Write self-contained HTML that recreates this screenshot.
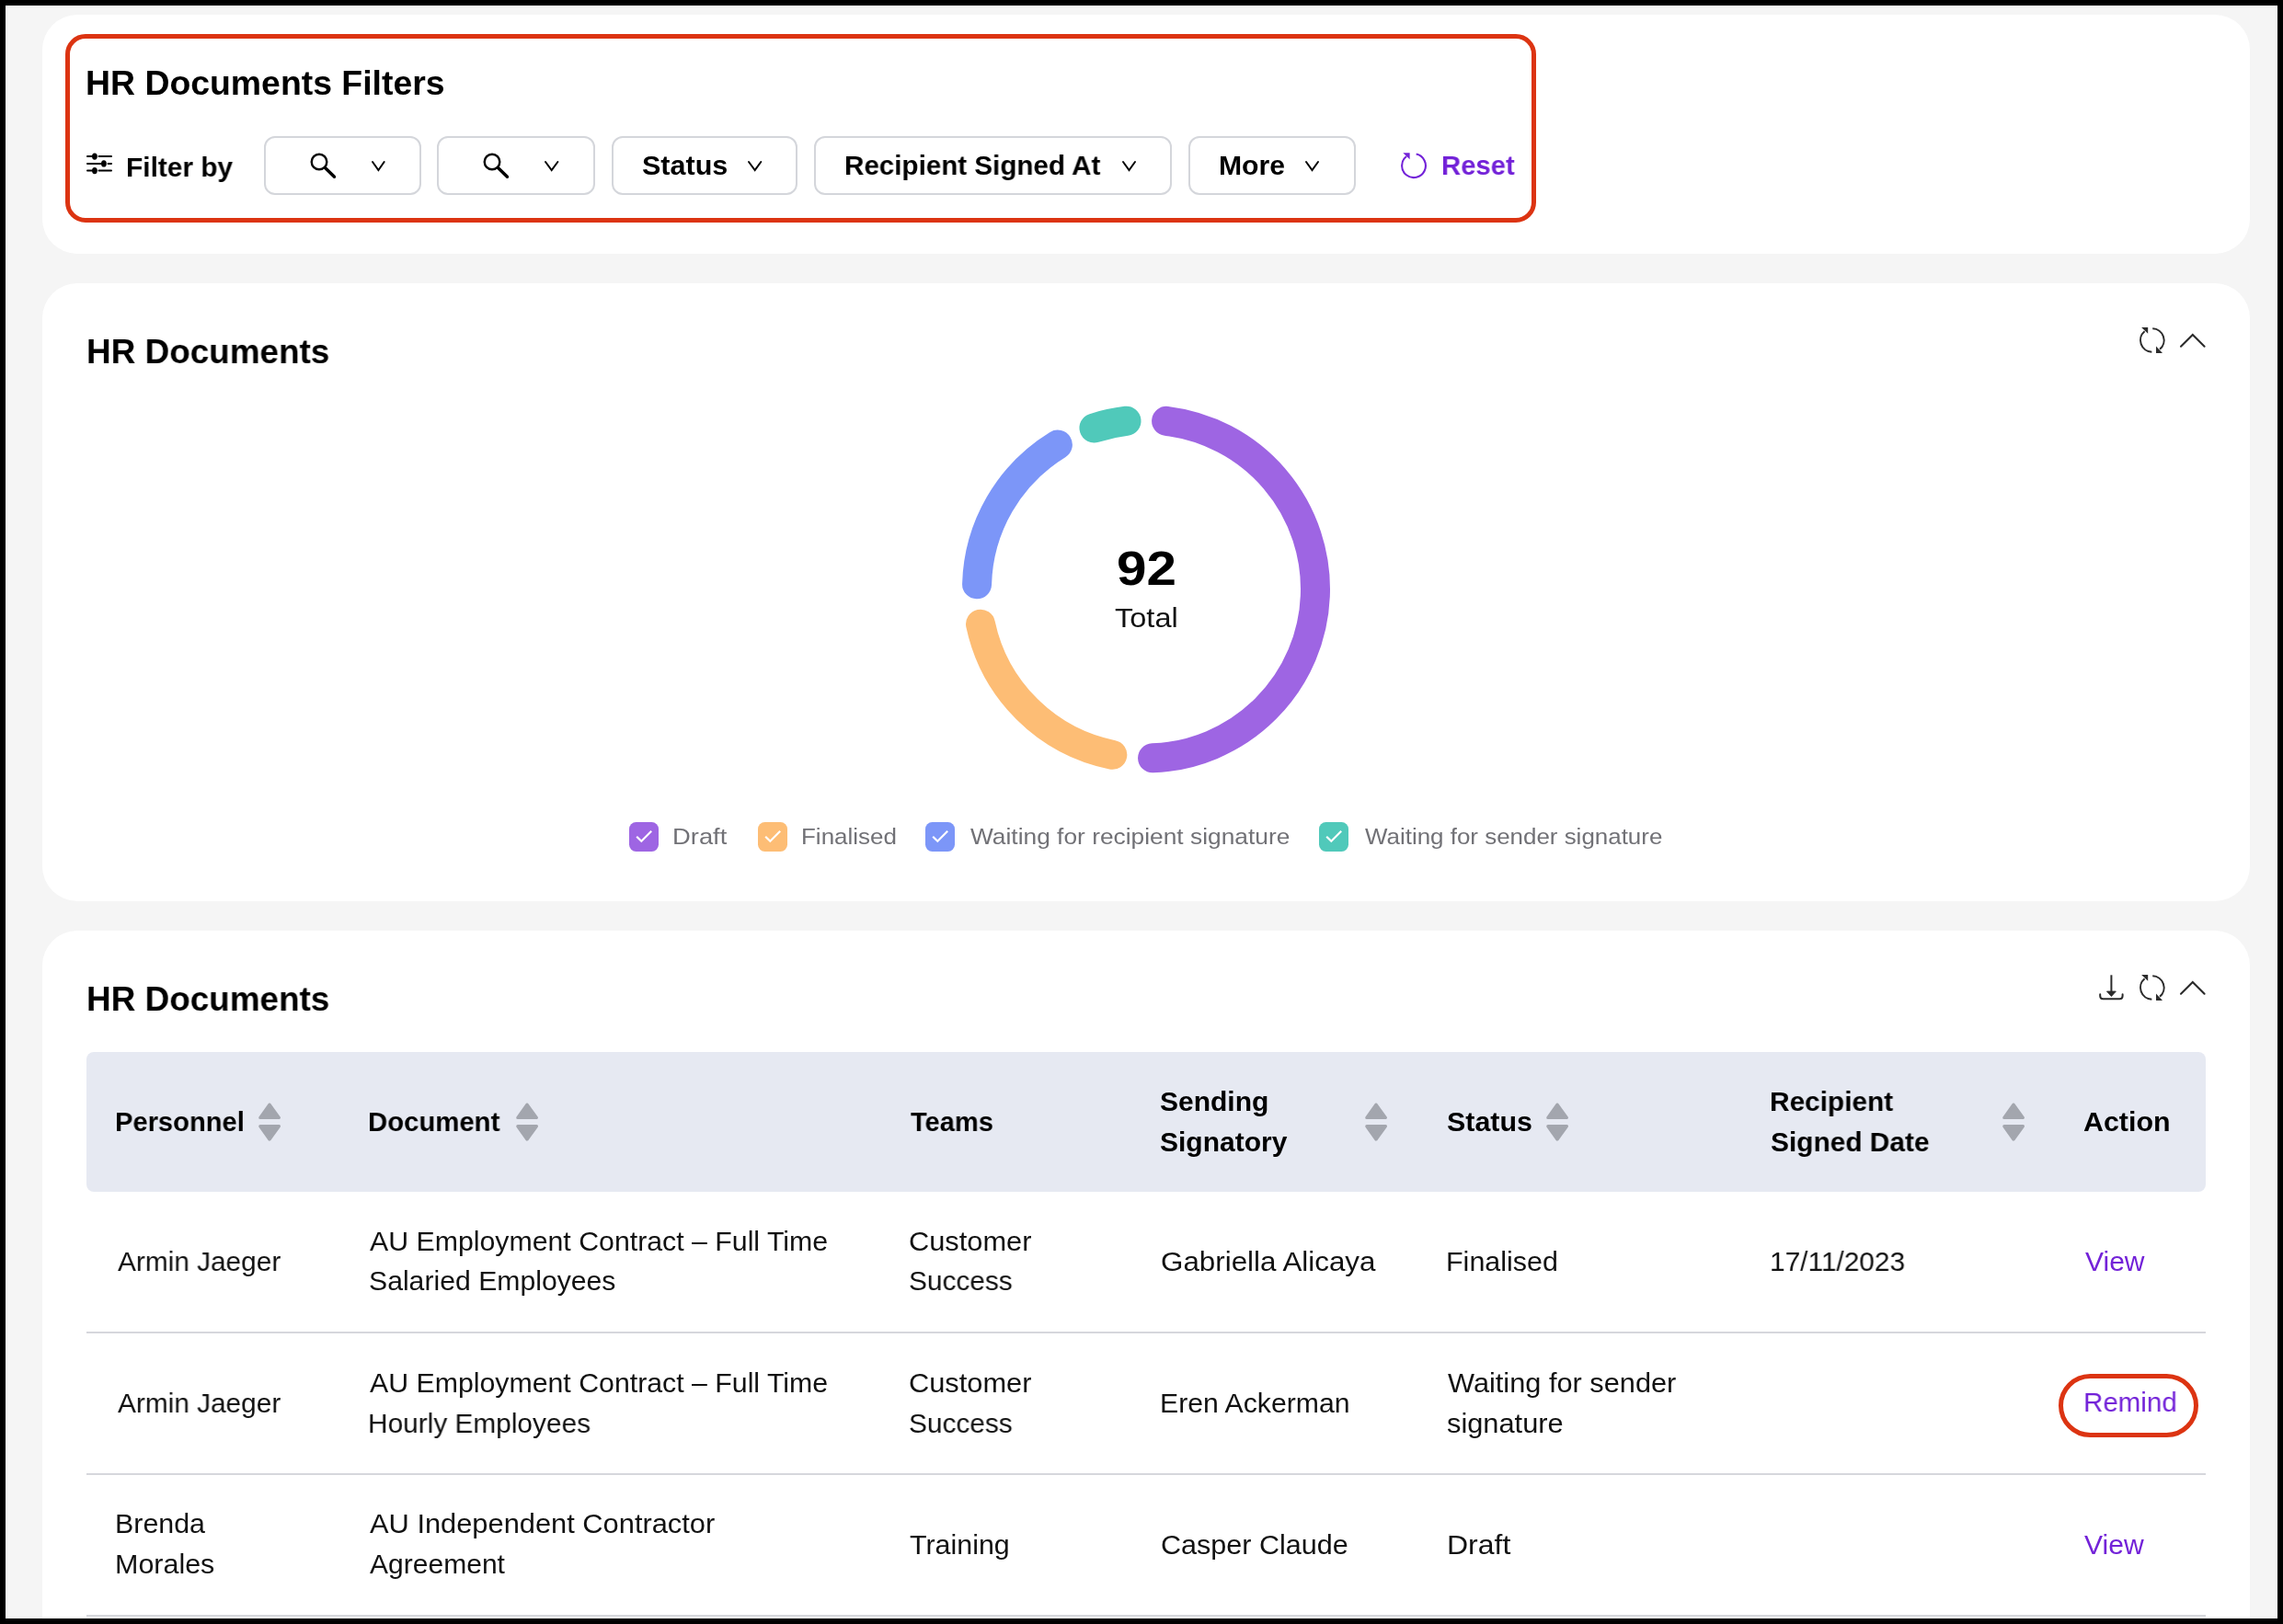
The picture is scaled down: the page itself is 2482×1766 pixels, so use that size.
<!DOCTYPE html>
<html><head><meta charset="utf-8"><style>
html,body{margin:0;padding:0}
body{width:2482px;height:1766px;background:#000;position:relative;overflow:hidden;font-family:"Liberation Sans", sans-serif}
.screen{position:absolute;left:6px;top:6px;width:2470px;height:1754px;background:#f5f5f5;overflow:hidden}
.a,.t,.card,.box,.anno{position:absolute}
.t{white-space:nowrap;transform-origin:0 0;will-change:transform}
.card{background:#fff;border-radius:38px}
.box{box-sizing:border-box;border:2px solid #d4d6db;border-radius:12px;background:#fff}
.anno{box-sizing:border-box;border:5px solid #dc3412}
svg.a{overflow:visible}
</style></head><body>
<div class="screen"><div style="position:absolute;left:-6px;top:-6px;width:2482px;height:1766px">
<div class="card" style="left:46px;top:15.5px;width:2400px;height:260.7px"></div>
<div class="card" style="left:46px;top:308px;width:2400px;height:672.3px"></div>
<div class="card" style="left:46px;top:1011.5px;width:2400px;height:900px"></div>
<div class="t" id="t1" style="left:93.00px;top:71.9px;font-size:37px;font-weight:700;color:#000;line-height:37px;transform:scaleX(1.0104);">HR Documents Filters</div>
<svg class="a" style="left:88px;top:160px" width="40" height="40" viewBox="88 160 40 40">
<g stroke="#000" stroke-width="2" stroke-linecap="round">
<line x1="95" y1="170.1" x2="100" y2="170.1"/><line x1="107.5" y1="170.1" x2="121" y2="170.1"/>
<line x1="95" y1="177.9" x2="110" y2="177.9"/><line x1="117.5" y1="177.9" x2="121" y2="177.9"/>
<line x1="95" y1="185.6" x2="100" y2="185.6"/><line x1="107.5" y1="185.6" x2="121" y2="185.6"/>
</g>
<g fill="#000"><ellipse cx="102.9" cy="170.1" rx="2.9" ry="3.7"/><ellipse cx="112.9" cy="177.9" rx="2.9" ry="3.7"/><ellipse cx="102.9" cy="185.6" rx="2.9" ry="3.7"/></g>
</svg>
<div class="t" id="t2" style="left:137.00px;top:167.1px;font-size:30px;font-weight:700;color:#000;line-height:30px;transform:scaleX(0.9941);">Filter by</div>
<div class="box" style="left:287.4px;top:148px;width:170.6px;height:64px"></div>
<svg class="a" style="left:331.5px;top:160.5px" width="36" height="36" viewBox="331.5 160.5 36 36">
<circle cx="346.5" cy="175.5" r="8.3" fill="none" stroke="#000" stroke-width="2.4"/>
<line x1="353.0" y1="182.0" x2="363.0" y2="191.8" stroke="#000" stroke-width="3.4" stroke-linecap="round"/>
</svg>
<svg class="a" style="left:399.6px;top:170.5px" width="22.7" height="19.1" viewBox="399.6 170.5 22.7 19.1">
<polyline points="404.6,175.5 411.0,184.6 417.3,175.5" fill="none" stroke="#000" stroke-width="2" stroke-linecap="round" stroke-linejoin="miter"/></svg>
<div class="box" style="left:475.4px;top:148px;width:171.9px;height:64px"></div>
<svg class="a" style="left:519.5px;top:160.5px" width="36" height="36" viewBox="519.5 160.5 36 36">
<circle cx="534.5" cy="175.5" r="8.3" fill="none" stroke="#000" stroke-width="2.4"/>
<line x1="541.0" y1="182.0" x2="551.0" y2="191.8" stroke="#000" stroke-width="3.4" stroke-linecap="round"/>
</svg>
<svg class="a" style="left:587.6px;top:170.5px" width="23.4" height="19.1" viewBox="587.6 170.5 23.4 19.1">
<polyline points="592.6,175.5 599.3,184.6 606.0,175.5" fill="none" stroke="#000" stroke-width="2" stroke-linecap="round" stroke-linejoin="miter"/></svg>
<div class="box" style="left:664.7px;top:148px;width:202.3px;height:64px"></div>
<div class="t" id="t3" style="left:698.00px;top:164.7px;font-size:30px;font-weight:700;color:#000;line-height:30px;transform:scaleX(1.0173);">Status</div>
<svg class="a" style="left:808.7px;top:170.5px" width="23.3" height="19.1" viewBox="808.7 170.5 23.3 19.1">
<polyline points="813.7,175.5 820.4,184.6 827.0,175.5" fill="none" stroke="#000" stroke-width="2" stroke-linecap="round" stroke-linejoin="miter"/></svg>
<div class="box" style="left:884.5px;top:148px;width:389.6px;height:64px"></div>
<div class="t" id="t4" style="left:917.50px;top:164.7px;font-size:30px;font-weight:700;color:#000;line-height:30px;transform:scaleX(0.9863);">Recipient Signed At</div>
<svg class="a" style="left:1215.8px;top:170.5px" width="23.0" height="19.1" viewBox="1215.8 170.5 23.0 19.1">
<polyline points="1220.8,175.5 1227.3,184.6 1233.8,175.5" fill="none" stroke="#000" stroke-width="2" stroke-linecap="round" stroke-linejoin="miter"/></svg>
<div class="box" style="left:1291.6px;top:148px;width:182.7px;height:64px"></div>
<div class="t" id="t5" style="left:1324.50px;top:164.7px;font-size:30px;font-weight:700;color:#000;line-height:30px;transform:scaleX(1.0044);">More</div>
<svg class="a" style="left:1415.4px;top:170.5px" width="23.0" height="19.1" viewBox="1415.4 170.5 23.0 19.1">
<polyline points="1420.4,175.5 1426.9,184.6 1433.4,175.5" fill="none" stroke="#000" stroke-width="2" stroke-linecap="round" stroke-linejoin="miter"/></svg>
<svg class="a" style="left:1515px;top:158px" width="45" height="42" viewBox="1515 158 45 42">
<path d="M1539.68,167.58 A12.9,12.9 0 1 1 1529.06,170.03" fill="none" stroke="#7322d8" stroke-width="2.1"/>
<polygon points="1525.3,166.3 1532.6,166.3 1532.6,173.3" fill="#7322d8"/>
</svg>
<div class="t" id="t6" style="left:1566.50px;top:164.7px;font-size:30px;font-weight:700;color:#7322d8;line-height:30px;transform:scaleX(0.9758);">Reset</div>
<div class="anno" style="left:71px;top:37px;width:1599px;height:204.6px;border-radius:22px"></div>
<div class="t" id="t7" style="left:93.50px;top:363.8px;font-size:37px;font-weight:700;color:#000;line-height:37px;transform:scaleX(0.9970);">HR Documents</div>
<svg class="a" style="left:2324px;top:354px" width="34" height="34" viewBox="2324 354 34 34">
<path d="M2340.25,357.21 A12.8,12.8 0 0 1 2348.03,379.81" fill="none" stroke="#2b2b2b" stroke-width="2"/>
<path d="M2339.35,382.79 A12.8,12.8 0 0 1 2331.57,360.19" fill="none" stroke="#2b2b2b" stroke-width="2"/>
<polygon points="2344,376.6 2344,384 2351,384" fill="#2b2b2b"/>
<polygon points="2328.1,356 2335.2,356 2335.2,362.8" fill="#2b2b2b"/>
</svg>
<svg class="a" style="left:2366.8px;top:359.5px" width="33.6" height="20.7" viewBox="2366.8 359.5 33.6 20.7">
<polyline points="2370.8,376.2 2383.6000000000004,363.5 2396.4,376.2" fill="none" stroke="#2b2b2b" stroke-width="2.1" stroke-linecap="round"/></svg>
<svg class="a" style="left:1020px;top:420px" width="450" height="450" viewBox="1020 420 450 450">
<path d="M1268.11,457.83 A184,184 0 0 1 1253.06,824.36" fill="none" stroke="#9e65e3" stroke-width="32" stroke-linecap="round"/>
<path d="M1209.32,820.81 A184,184 0 0 1 1066.02,678.76" fill="none" stroke="#fdbd75" stroke-width="32" stroke-linecap="round"/>
<path d="M1062.07,635.36 A184,184 0 0 1 1149.86,483.61" fill="none" stroke="#7c96f8" stroke-width="32" stroke-linecap="round"/>
<path d="M1189.45,465.41 A184,184 0 0 1 1224.53,457.76" fill="none" stroke="#50c9ba" stroke-width="32" stroke-linecap="round"/>
</svg>
<div class="t" id="t8" style="left:1214.00px;top:592.0px;font-size:52px;font-weight:700;color:#000;line-height:52px;transform:scaleX(1.1227);">92</div>
<div class="t" id="t9" style="left:1211.50px;top:656.6px;font-size:30px;font-weight:400;color:#111;line-height:30px;transform:scaleX(1.0847);">Total</div>
<svg class="a" style="left:684px;top:894px" width="32" height="32" viewBox="0 0 32 32">
<rect x="0" y="0" width="32" height="32" rx="7.5" fill="#9e65e3"/>
<polyline points="8.2,15.8 13.3,20.8 24.2,9.8" fill="none" stroke="#fff" stroke-width="2.2"/></svg>
<div class="t" id="t10" style="left:731.00px;top:898.2px;font-size:24.8px;font-weight:400;color:#717176;line-height:24.8px;transform:scaleX(1.1036);">Draft</div>
<svg class="a" style="left:824.2px;top:894px" width="32" height="32" viewBox="0 0 32 32">
<rect x="0" y="0" width="32" height="32" rx="7.5" fill="#fdbd75"/>
<polyline points="8.2,15.8 13.3,20.8 24.2,9.8" fill="none" stroke="#fff" stroke-width="2.2"/></svg>
<div class="t" id="t11" style="left:870.50px;top:898.2px;font-size:24.8px;font-weight:400;color:#717176;line-height:24.8px;transform:scaleX(1.0477);">Finalised</div>
<svg class="a" style="left:1006px;top:894px" width="32" height="32" viewBox="0 0 32 32">
<rect x="0" y="0" width="32" height="32" rx="7.5" fill="#7c96f8"/>
<polyline points="8.2,15.8 13.3,20.8 24.2,9.8" fill="none" stroke="#fff" stroke-width="2.2"/></svg>
<div class="t" id="t12" style="left:1055.00px;top:898.2px;font-size:24.8px;font-weight:400;color:#717176;line-height:24.8px;transform:scaleX(1.0617);">Waiting for recipient signature</div>
<svg class="a" style="left:1434px;top:894px" width="32" height="32" viewBox="0 0 32 32">
<rect x="0" y="0" width="32" height="32" rx="7.5" fill="#50c9ba"/>
<polyline points="8.2,15.8 13.3,20.8 24.2,9.8" fill="none" stroke="#fff" stroke-width="2.2"/></svg>
<div class="t" id="t13" style="left:1484.00px;top:898.2px;font-size:24.8px;font-weight:400;color:#717176;line-height:24.8px;transform:scaleX(1.0457);">Waiting for sender signature</div>
<div class="t" id="t14" style="left:93.50px;top:1067.8px;font-size:37px;font-weight:700;color:#000;line-height:37px;transform:scaleX(0.9970);">HR Documents</div>
<svg class="a" style="left:2278px;top:1056px" width="34" height="34" viewBox="2278 1056 34 34">
<line x1="2295.4" y1="1060.3" x2="2295.4" y2="1079" stroke="#2b2b2b" stroke-width="2"/>
<polygon points="2290.4,1078 2300.4,1078 2295.4,1083.6" fill="#2b2b2b" stroke="#2b2b2b" stroke-width="0.8" stroke-linejoin="round"/>
<path d="M2283.2,1081.3 V1083 Q2283.2,1086.2 2286.4,1086.2 H2304.4 Q2307.6,1086.2 2307.6,1083 V1081.3" fill="none" stroke="#2b2b2b" stroke-width="2" stroke-linecap="round"/>
</svg>
<svg class="a" style="left:2324px;top:1058px" width="34" height="34" viewBox="2324 1058 34 34">
<path d="M2340.25,1061.21 A12.8,12.8 0 0 1 2348.03,1083.81" fill="none" stroke="#2b2b2b" stroke-width="2"/>
<path d="M2339.35,1086.79 A12.8,12.8 0 0 1 2331.57,1064.19" fill="none" stroke="#2b2b2b" stroke-width="2"/>
<polygon points="2344,1080.6 2344,1088 2351,1088" fill="#2b2b2b"/>
<polygon points="2328.1,1060 2335.2,1060 2335.2,1066.8" fill="#2b2b2b"/>
</svg>
<svg class="a" style="left:2366.7px;top:1063.6px" width="33.6" height="20.7" viewBox="2366.7 1063.6 33.6 20.7">
<polyline points="2370.7,1080.3 2383.5,1067.6 2396.2999999999997,1080.3" fill="none" stroke="#2b2b2b" stroke-width="2.1" stroke-linecap="round"/></svg>
<div class="a" style="left:94px;top:1143.8px;width:2304px;height:151.9px;background:#e6e9f2;border-radius:8px"></div>
<div class="t" id="t15" style="left:125.00px;top:1205.2px;font-size:30px;font-weight:700;color:#000;line-height:30px;transform:scaleX(0.9703);">Personnel</div>
<svg class="a" style="left:279px;top:1196px" width="28" height="48" viewBox="279 1196 28 48">
<path d="M293,1201.2 L303.3,1215.4 L282.9,1215.4 Z" fill="#a3a6ae" stroke="#a3a6ae" stroke-width="3.4" stroke-linejoin="round"/>
<path d="M293,1238.9 L303.3,1224.7 L282.9,1224.7 Z" fill="#a3a6ae" stroke="#a3a6ae" stroke-width="3.4" stroke-linejoin="round"/>
</svg>
<div class="t" id="t16" style="left:399.50px;top:1205.2px;font-size:30px;font-weight:700;color:#000;line-height:30px;transform:scaleX(0.9769);">Document</div>
<svg class="a" style="left:558.7px;top:1196px" width="28" height="48" viewBox="558.7 1196 28 48">
<path d="M572.7,1201.2 L583.0,1215.4 L562.6,1215.4 Z" fill="#a3a6ae" stroke="#a3a6ae" stroke-width="3.4" stroke-linejoin="round"/>
<path d="M572.7,1238.9 L583.0,1224.7 L562.6,1224.7 Z" fill="#a3a6ae" stroke="#a3a6ae" stroke-width="3.4" stroke-linejoin="round"/>
</svg>
<div class="t" id="t17" style="left:989.50px;top:1205.2px;font-size:30px;font-weight:700;color:#000;line-height:30px;transform:scaleX(0.9680);">Teams</div>
<div class="t" id="t18" style="left:1261.00px;top:1182.6px;font-size:30px;font-weight:700;color:#000;line-height:30px;">Sending</div>
<div class="t" id="t19" style="left:1261.00px;top:1227.1px;font-size:30px;font-weight:700;color:#000;line-height:30px;transform:scaleX(0.9982);">Signatory</div>
<svg class="a" style="left:1482.3px;top:1196px" width="28" height="48" viewBox="1482.3 1196 28 48">
<path d="M1496.3,1201.2 L1506.6,1215.4 L1486.2,1215.4 Z" fill="#a3a6ae" stroke="#a3a6ae" stroke-width="3.4" stroke-linejoin="round"/>
<path d="M1496.3,1238.9 L1506.6,1224.7 L1486.2,1224.7 Z" fill="#a3a6ae" stroke="#a3a6ae" stroke-width="3.4" stroke-linejoin="round"/>
</svg>
<div class="t" id="t20" style="left:1572.50px;top:1205.2px;font-size:30px;font-weight:700;color:#000;line-height:30px;transform:scaleX(1.0128);">Status</div>
<svg class="a" style="left:1678.7px;top:1196px" width="28" height="48" viewBox="1678.7 1196 28 48">
<path d="M1692.7,1201.2 L1703.0,1215.4 L1682.6000000000001,1215.4 Z" fill="#a3a6ae" stroke="#a3a6ae" stroke-width="3.4" stroke-linejoin="round"/>
<path d="M1692.7,1238.9 L1703.0,1224.7 L1682.6000000000001,1224.7 Z" fill="#a3a6ae" stroke="#a3a6ae" stroke-width="3.4" stroke-linejoin="round"/>
</svg>
<div class="t" id="t21" style="left:1924.00px;top:1182.6px;font-size:30px;font-weight:700;color:#000;line-height:30px;transform:scaleX(0.9937);">Recipient</div>
<div class="t" id="t22" style="left:1925.00px;top:1227.1px;font-size:30px;font-weight:700;color:#000;line-height:30px;transform:scaleX(0.9952);">Signed Date</div>
<svg class="a" style="left:2174.8px;top:1196px" width="28" height="48" viewBox="2174.8 1196 28 48">
<path d="M2188.8,1201.2 L2199.1000000000004,1215.4 L2178.7000000000003,1215.4 Z" fill="#a3a6ae" stroke="#a3a6ae" stroke-width="3.4" stroke-linejoin="round"/>
<path d="M2188.8,1238.9 L2199.1000000000004,1224.7 L2178.7000000000003,1224.7 Z" fill="#a3a6ae" stroke="#a3a6ae" stroke-width="3.4" stroke-linejoin="round"/>
</svg>
<div class="t" id="t23" style="left:2265.00px;top:1205.2px;font-size:30px;font-weight:700;color:#000;line-height:30px;transform:scaleX(1.0130);">Action</div>
<div class="t" id="t24" style="left:127.50px;top:1356.9px;font-size:30px;font-weight:400;color:#111;line-height:30px;transform:scaleX(0.9933);">Armin Jaeger</div>
<div class="t" id="t25" style="left:402.00px;top:1334.9px;font-size:30px;font-weight:400;color:#111;line-height:30px;transform:scaleX(1.0094);">AU Employment Contract – Full Time</div>
<div class="t" id="t26" style="left:401.00px;top:1378.4px;font-size:30px;font-weight:400;color:#111;line-height:30px;transform:scaleX(1.0061);">Salaried Employees</div>
<div class="t" id="t27" style="left:987.50px;top:1334.9px;font-size:30px;font-weight:400;color:#111;line-height:30px;transform:scaleX(1.0264);">Customer</div>
<div class="t" id="t28" style="left:987.50px;top:1378.4px;font-size:30px;font-weight:400;color:#111;line-height:30px;transform:scaleX(0.9930);">Success</div>
<div class="t" id="t29" style="left:1261.50px;top:1356.9px;font-size:30px;font-weight:400;color:#111;line-height:30px;transform:scaleX(1.0448);">Gabriella Alicaya</div>
<div class="t" id="t30" style="left:1572.00px;top:1356.9px;font-size:30px;font-weight:400;color:#111;line-height:30px;transform:scaleX(1.0156);">Finalised</div>
<div class="t" id="t31" style="left:1924.00px;top:1356.9px;font-size:30px;font-weight:400;color:#111;line-height:30px;transform:scaleX(0.9945);">17/11/2023</div>
<div class="t" id="t32" style="left:2266.50px;top:1356.9px;font-size:30px;font-weight:400;color:#7322d8;line-height:30px;transform:scaleX(0.9940);">View</div>
<div class="t" id="t33" style="left:127.50px;top:1510.9px;font-size:30px;font-weight:400;color:#111;line-height:30px;transform:scaleX(0.9933);">Armin Jaeger</div>
<div class="t" id="t34" style="left:402.00px;top:1489.1px;font-size:30px;font-weight:400;color:#111;line-height:30px;transform:scaleX(1.0094);">AU Employment Contract – Full Time</div>
<div class="t" id="t35" style="left:400.00px;top:1532.6px;font-size:30px;font-weight:400;color:#111;line-height:30px;transform:scaleX(0.9942);">Hourly Employees</div>
<div class="t" id="t36" style="left:987.50px;top:1489.1px;font-size:30px;font-weight:400;color:#111;line-height:30px;transform:scaleX(1.0264);">Customer</div>
<div class="t" id="t37" style="left:987.50px;top:1532.6px;font-size:30px;font-weight:400;color:#111;line-height:30px;transform:scaleX(0.9930);">Success</div>
<div class="t" id="t38" style="left:1260.50px;top:1510.9px;font-size:30px;font-weight:400;color:#111;line-height:30px;transform:scaleX(1.0070);">Eren Ackerman</div>
<div class="t" id="t39" style="left:1573.50px;top:1488.8px;font-size:30px;font-weight:400;color:#111;line-height:30px;transform:scaleX(1.0248);">Waiting for sender</div>
<div class="t" id="t40" style="left:1572.50px;top:1532.5px;font-size:30px;font-weight:400;color:#111;line-height:30px;transform:scaleX(1.0265);">signature</div>
<div class="t" id="t41" style="left:2265.00px;top:1510.4px;font-size:30px;font-weight:400;color:#7322d8;line-height:30px;transform:scaleX(0.9841);">Remind</div>
<div class="t" id="t42" style="left:124.50px;top:1642.4px;font-size:30px;font-weight:400;color:#111;line-height:30px;transform:scaleX(1.0128);">Brenda</div>
<div class="t" id="t43" style="left:124.50px;top:1686.2px;font-size:30px;font-weight:400;color:#111;line-height:30px;transform:scaleX(1.0155);">Morales</div>
<div class="t" id="t44" style="left:402.00px;top:1642.4px;font-size:30px;font-weight:400;color:#111;line-height:30px;transform:scaleX(1.0274);">AU Independent Contractor</div>
<div class="t" id="t45" style="left:402.00px;top:1686.2px;font-size:30px;font-weight:400;color:#111;line-height:30px;transform:scaleX(1.0014);">Agreement</div>
<div class="t" id="t46" style="left:989.00px;top:1664.5px;font-size:30px;font-weight:400;color:#111;line-height:30px;transform:scaleX(1.0135);">Training</div>
<div class="t" id="t47" style="left:1261.50px;top:1664.5px;font-size:30px;font-weight:400;color:#111;line-height:30px;transform:scaleX(1.0182);">Casper Claude</div>
<div class="t" id="t48" style="left:1572.50px;top:1664.5px;font-size:30px;font-weight:400;color:#111;line-height:30px;transform:scaleX(1.0667);">Draft</div>
<div class="t" id="t49" style="left:2266.00px;top:1664.5px;font-size:30px;font-weight:400;color:#7322d8;line-height:30px;transform:scaleX(1.0034);">View</div>
<div class="a" style="left:94px;top:1448px;width:2304px;height:2px;background:#d6d7dc"></div>
<div class="a" style="left:94px;top:1602px;width:2304px;height:2px;background:#d6d7dc"></div>
<div class="a" style="left:94px;top:1756px;width:2304px;height:2px;background:#d6d7dc"></div>
<div class="anno" style="left:2238.2px;top:1493.5px;width:151.4px;height:69px;border-radius:35px"></div>
</div></div>
</body></html>
